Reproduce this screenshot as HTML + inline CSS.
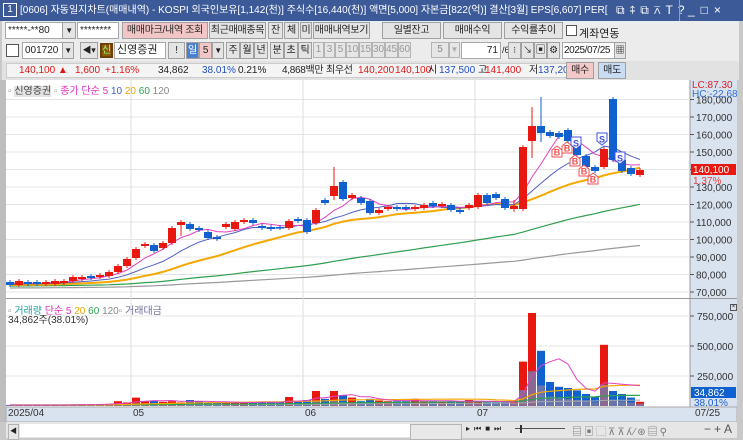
<!DOCTYPE html>
<html><head><meta charset="utf-8">
<style>
*{margin:0;padding:0;box-sizing:border-box}
body{width:743px;height:440px;overflow:hidden;background:#c9c9c9;font-family:"Liberation Sans","Noto Sans CJK KR",sans-serif;font-size:10px;color:#222;position:relative}
.a{position:absolute;white-space:nowrap}
.tb{left:0;top:0;width:743px;height:21px;background:#3d5a98;color:#fff;font-size:10px;line-height:21px}
.row{left:2px;width:737px;background:#ececec}
.inp{background:#fff;border:1px solid #a8a8a8;height:17px;line-height:15px;padding-left:2px;overflow:hidden}
.btn{background:#e4e4e4;border:1px solid #a0a0a0;height:17px;line-height:15px;text-align:center;letter-spacing:-0.3px;overflow:hidden}
.sb{background:#e6e6e6;border:1px solid #b4b4b4;height:16px;line-height:14px;text-align:center;color:#222}
.r{color:#e01818}.b{color:#2050c0}
.i4{top:64px;line-height:13px;height:13px}
</style></head><body>
<div class="a tb">
 <span class="a" style="left:3px;top:3px;width:14px;height:14px;border:1px solid #fff;line-height:12px;text-align:center;font-size:10px">1</span>
 <span class="a" style="left:20px;width:592px;overflow:hidden">[0606] 자동일지차트(매매내역) - KOSPI 외국인보유[1,142(천)] 주식수[16,440(천)] 액면[5,000] 자본금[822(억)] 결산[3월] EPS[6,607] PER[</span>
 <span class="a" style="left:616px;font-size:12px;letter-spacing:5px">⧉⇞⧉⊼T?</span>
 <span class="a" style="left:679px;width:1px;height:21px;background:#8aa0c8"></span>
 <span class="a" style="left:688px;font-size:12px;letter-spacing:6px">_□×</span>
</div>
<div class="a row" style="top:21px;height:20px"></div>
<div class="a inp" style="left:5px;top:22px;width:58px">*****-**80</div>
<div class="a btn" style="left:62px;top:22px;width:14px;font-size:8px">▼</div>
<div class="a inp" style="left:77px;top:22px;width:42px">********</div>
<div class="a btn" style="left:122px;top:22px;width:86px;background:#f2c6c6">매매마크/내역 조회</div>
<div class="a btn" style="left:209px;top:22px;width:57px">최근매매종목</div>
<div class="a btn" style="left:268px;top:22px;width:15px">잔</div>
<div class="a btn" style="left:284px;top:22px;width:15px">체</div>
<div class="a btn" style="left:300px;top:22px;width:12px">미</div>
<div class="a btn" style="left:313px;top:22px;width:57px">매매내역보기</div>
<div class="a btn" style="left:382px;top:22px;width:59px">일별잔고</div>
<div class="a btn" style="left:443px;top:22px;width:59px">매매수익</div>
<div class="a btn" style="left:504px;top:22px;width:59px">수익률추이</div>
<div class="a" style="left:566px;top:25px;width:11px;height:11px;background:#fff;border:1px solid #555"></div>
<div class="a" style="left:579px;top:25px;font-size:11px">계좌연동</div>
<div class="a row" style="top:41px;height:20px"></div>
<div class="a" style="left:6px;top:44px;width:13px;height:13px;border:1px solid #555;background:#fff"></div>
<div class="a inp" style="left:22px;top:42px;width:41px">001720</div>
<div class="a btn" style="left:62px;top:42px;width:12px;font-size:8px">▼</div>
<div class="a btn" style="left:80px;top:42px;width:18px;font-size:9px">◀▾</div>
<div class="a" style="left:100px;top:43px;width:13px;height:15px;background:#8a5a10;border:2px solid #6a4008;color:#9f6;font-size:10px;line-height:11px;text-align:center">신</div>
<div class="a inp" style="left:114px;top:42px;width:52px;font-size:11px">신영증권</div>
<div class="a btn" style="left:168px;top:42px;width:17px">!</div>
<div class="a btn" style="left:186px;top:42px;width:13px;background:#4a80d0;color:#fff">일</div>
<div class="a btn" style="left:199px;top:42px;width:13px;background:#f2c6c6">5</div>
<div class="a btn" style="left:212px;top:42px;width:12px;font-size:8px">▼</div>
<div class="a btn" style="left:226px;top:42px;width:14px">주</div>
<div class="a btn" style="left:240px;top:42px;width:14px">월</div>
<div class="a btn" style="left:254px;top:42px;width:14px">년</div>
<div class="a btn" style="left:270px;top:42px;width:14px">분</div>
<div class="a btn" style="left:284px;top:42px;width:14px">초</div>
<div class="a btn" style="left:298px;top:42px;width:14px">틱</div>
<div class="a" style="left:313px;top:42px;color:#999;font-size:10px">
 <span class="sb a" style="left:0;width:11px;color:#999">1</span><span class="sb a" style="left:11px;width:11px;color:#999">3</span><span class="sb a" style="left:22px;width:11px;color:#999">5</span><span class="sb a" style="left:33px;width:13px;color:#999">10</span><span class="sb a" style="left:46px;width:13px;color:#999">15</span><span class="sb a" style="left:59px;width:13px;color:#999">30</span><span class="sb a" style="left:72px;width:13px;color:#999">45</span><span class="sb a" style="left:85px;width:13px;color:#999">60</span></div>
<div class="a sb" style="left:431px;top:42px;width:18px;color:#888">5</div>
<div class="a sb" style="left:449px;top:42px;width:11px;color:#aaa;font-size:8px">▼</div>
<div class="a inp" style="left:461px;top:42px;width:40px;text-align:right;padding-right:2px">71</div>
<div class="a" style="left:502px;top:45px;font-size:9px">/600</div>
<div class="a btn" style="left:508px;top:42px;width:13px;font-size:9px">⁝</div>
<div class="a btn" style="left:521px;top:42px;width:13px;font-size:9px">↘</div>
<div class="a btn" style="left:534px;top:42px;width:13px;font-size:10px">▣</div>
<div class="a btn" style="left:547px;top:42px;width:13px;font-size:10px">⚙</div>
<div class="a inp" style="left:562px;top:42px;width:53px;font-size:10px;letter-spacing:-0.4px;padding-left:1px">2025/07/25</div>
<div class="a btn" style="left:614px;top:42px;width:12px;font-size:9px">▦</div>
<div class="a row" style="top:61px;height:19px;background:#e2e2e2"></div>
<div class="a" style="left:6px;top:63px;width:575px;height:15px;background:#f4f4f4;border:1px solid #ccc"></div>
<div class="a r i4" style="left:19px">140,100 ▲</div>
<div class="a r i4" style="left:75px">1,600</div>
<div class="a r i4" style="left:105px">+1.16%</div>
<div class="a i4" style="left:158px">34,862</div>
<div class="a b i4" style="left:202px">38.01%</div>
<div class="a i4" style="left:238px">0.21%</div>
<div class="a i4" style="left:282px;letter-spacing:-0.3px">4,868백만</div>
<div class="a i4" style="left:326px;letter-spacing:-0.3px">최우선</div>
<div class="a r i4" style="left:358px">140,200</div>
<div class="a r i4" style="left:395px">140,100</div>
<div class="a i4" style="left:428px">시</div>
<div class="a b i4" style="left:439px">137,500</div>
<div class="a i4" style="left:478px">고</div>
<div class="a r i4" style="left:485px">141,400</div>
<div class="a i4" style="left:529px">저</div>
<div class="a b i4" style="left:538px">137,200</div>
<div class="a btn" style="left:566px;top:62px;width:28px;background:#f4c8c8">매수</div>
<div class="a btn" style="left:598px;top:62px;width:28px;background:#c8dcf4">매도</div>
<svg class="a" style="left:0;top:0" width="743" height="440" id="sv">
<rect x="6" y="80" width="684" height="327" fill="#fff"/>
<rect x="0" y="80" width="6" height="342" fill="#bdbdbd"/>
<rect x="690" y="80" width="47" height="327" fill="#d9e3f0"/>
<line x1="690" y1="80" x2="690" y2="407" stroke="#999"/>
<line x1="6" y1="298.5" x2="737" y2="298.5" stroke="#999"/>
<rect x="6" y="407" width="731" height="15" fill="#d9e3f0" stroke="#aaa"/>
<rect x="6" y="422" width="731" height="16" fill="#e6e6e6"/>
<rect x="737" y="80" width="6" height="360" fill="#c9c9c9"/>
<g id="g"></g>
</svg>
<div class="a" style="left:8px;top:82px;font-size:10px;color:#666"><span style="color:#999">▫</span> <span style="background:#e4e4e4;color:#444">신영증권</span> <span style="color:#999">▫</span> <span style="color:#e030c0">종가 단순 5</span> <span style="color:#4060c0">10</span> <span style="color:#f0a800">20</span> <span style="color:#30a050">60</span> <span style="color:#888">120</span></div>
<div class="a" style="left:692px;top:81px;font-size:10px;color:#e02020;line-height:9px">LC:87.30</div>
<div class="a" style="left:692px;top:90px;font-size:10px;color:#3070d0;line-height:9px">HC:-22.68</div>
<div class="a" style="left:8px;top:302px;font-size:10px"><span style="color:#999">▫</span> <span style="color:#20a0a0">거래량</span> <span style="color:#e030c0">단순 5</span> <span style="color:#f0a800">20</span> <span style="color:#30a050">60</span> <span style="color:#888">120</span><span style="color:#999">▫</span> <span style="color:#7070a0">거래대금</span></div>
<div class="a" style="left:8px;top:311px;font-size:10px;color:#333">34,862주(38.01%)</div>
<div class="a" style="left:730px;top:304px;width:7px;height:7px;border:1px solid #555;font-size:6px;line-height:5px;text-align:center">×</div>
<div class="a" style="left:8px;top:408px;font-size:10px;color:#333">2025/04</div>
<div class="a" style="left:133px;top:408px;font-size:10px;color:#333">05</div>
<div class="a" style="left:305px;top:408px;font-size:10px;color:#333">06</div>
<div class="a" style="left:477px;top:408px;font-size:10px;color:#333">07</div>
<div class="a" style="left:695px;top:408px;font-size:10px;color:#333">07/25</div>
<div class="a sb" style="left:8px;top:424px;width:11px;font-size:7px">◀</div>
<div class="a" style="left:20px;top:424px;width:390px;height:13px;background:#fff"></div>
<div class="a sb" style="left:410px;top:424px;width:52px;background:#e8e8e8"></div>
<div class="a" style="left:466px;top:424px;font-size:8px;letter-spacing:4px">▸⏮■⏭</div>
<div class="a" style="left:515px;top:428px;width:50px;height:1px;background:#555"></div>
<div class="a" style="left:520px;top:425px;width:2px;height:8px;background:#333"></div>
<div class="a" style="left:572px;top:423px;font-size:10px;color:#777;letter-spacing:2px">▤▣⬚⊼⊼ʎ⁄⊛▤⚲</div>
<div class="a" style="left:704px;top:422px;font-size:12px;color:#555;letter-spacing:3px">−+A</div>
<script>
const g=document.getElementById('g');let h='';
const Y=p=>117+(170-p)*1.75;
for(let p=180;p>=70;p-=10){const y=Y(p);h+=`<line x1="6" y1="${y}" x2="690" y2="${y}" stroke="#e4e4e4"/>`;
 h+=`<line x1="690" y1="${y}" x2="694" y2="${y}" stroke="#555"/><text x="696" y="${y+4}" font-size="10" fill="#333">${p},000</text>`;}
[131,303,475].forEach(x=>{h+=`<line x1="${x}" y1="80" x2="${x}" y2="407" stroke="#ddd"/>`});
[316,346,376].forEach((y,k)=>{h+=`<line x1="6" y1="${y}" x2="690" y2="${y}" stroke="#e4e4e4"/><line x1="690" y1="${y}" x2="694" y2="${y}" stroke="#555"/><text x="697" y="${y+4}" font-size="10" fill="#333">${['750,000','500,000','250,000'][k]}</text>`});
const C=[['b',282,285],['r',281,285],['b',282,284],['b',282,284],['r',282,284],['r',281,284],['r',281,283],['r',277,281],['r',277,279],['b',276,278],['r',275,277],['r',272,276],['r',266,272],['r',259,266],['r',249,258],['r',244,246],['b',245,251],['r',243,248],['r',228,243],['r',222,225,220,236],['b',224,229],['b',228,230],['b',232,238],['b',237,239],['r',224,227],['r',222,229],['r',220,222],['b',220,223],['b',226,228],['b',227,229],['b',227,228],['r',221,228],['b',219,221],['b',220,232],['r',210,223],['b',200,203],['r',186,196,167,200],['b',182,199],['r',195,198],['b',198,203],['b',201,213],['r',210,213],['r',207,209],['b',207,209],['b',207,209],['r',207,209],['r',205,208],['b',203,206],['r',204,206],['b',205,210],['b',210,212],['r',205,208],['r',195,207],['b',195,203],['b',194,198],['b',199,208],['r',206,209,200,212],['r',147,209],['r',126,141,107,158],['b',126,133,97,142],['b',132,136],['b',133,137],['b',130,141],['b',142,155],['b',156,167],['b',167,171],['r',149,167],['b',99,160],['b',160,171],['b',168,174],['r',170,175]];
const V=[8,8,8,8,8,9,10,12,14,12,15,18,40,30,70,40,45,35,40,30,50,40,30,25,30,35,25,30,35,30,30,75,40,50,125,60,125,90,70,40,60,45,40,40,40,60,40,40,35,40,40,50,40,30,30,30,40,370,775,460,200,160,150,130,100,75,510,125,100,70,35];
const cl=C.map(c=>c[0]=='r'?c[1]:c[2]);
const ma=(arr,n,pad)=>arr.map((_,i)=>{let s=0;for(let k=i-n+1;k<=i;k++)s+=k<0?pad:arr[k];return s/n});
const line=(a,xs,col,w)=>`<polyline fill="none" stroke="${col}" stroke-width="${w}" points="${a.map((v,i)=>xs(i)+','+v.toFixed(1)).join(' ')}"/>`;
const X=i=>10+9*i;
h+=line(ma(cl,120,288),X,'#999',1.2);
h+=line(ma(cl,60,286),X,'#30a050',1.2);
h+=line(ma(cl,20,285),X,'#f5a800',2);
h+=line(ma(cl,10,284),X,'#5060c0',1);
h+=line(ma(cl,5,283),X,'#e040c0',1);
C.forEach((c,i)=>{const x=X(i),col=c[0]=='r'?'#e81810':'#1060d0';const wt=c[3]||c[1]-2,wb=c[4]||c[2]+2;
 h+=`<line x1="${x}" y1="${wt}" x2="${x}" y2="${wb}" stroke="${col}"/><rect x="${x-4}" y="${c[1]}" width="8" height="${Math.max(c[2]-c[1],1.5)}" fill="${col}"/>`;});
const mk=(x,y,t,col)=>{h+= t=='B'?`<path d="M${x-5} ${y+5}V${y-2}L${x} ${y-6}L${x+5} ${y-2}V${y+5}Z" fill="#fff" stroke="${col}"/>`:`<path d="M${x-5} ${y-6}V${y+2}L${x} ${y+6}L${x+5} ${y+2}V${y-6}Z" fill="#fff" stroke="${col}"/>`;
 h+=`<text x="${x}" y="${y+3.5}" font-size="9" font-weight="bold" fill="${col}" text-anchor="middle">${t}</text>`};
[[557,152],[567,148],[575,161],[584,171],[593,179]].forEach(p=>mk(p[0],p[1],'B','#f05050'));
[[576,143],[602,139],[620,158]].forEach(p=>mk(p[0],p[1],'S','#4050e0'));
const VY=v=>406-v*0.12;
V.forEach((v,i)=>{const x=X(i),col=C[i][0]=='r'?'#e81810':'#1060d0';h+=`<rect x="${x-4}" y="${VY(v)}" width="8" height="${v*0.12}" fill="${col}"/>`;
 const price=170-(cl[i]-117)/1.75;const o=v*0.12*0.22*price/100+1;h+=`<rect x="${x-4}" y="${406-o}" width="8" height="${o}" fill="#7878a8" opacity="0.85"/>`;});
const vy=V.map(VY);
h+=line(ma(vy,120,405),X,'#aaa',1);
h+=line(ma(vy,60,405),X,'#30a050',1.2);
h+=line(ma(vy,20,405),X,'#f5a800',1.2);
h+=line(ma(vy,5,405),X,'#e040c0',1);
h+=`<rect x="691" y="164" width="45" height="11" fill="#e81810"/><text x="693" y="173" font-size="10" fill="#fff">140,100</text><text x="693" y="184" font-size="10" fill="#e84040">1.37%</text>`;
h+=`<rect x="691" y="387" width="45" height="11" fill="#1060d0"/><text x="694" y="396" font-size="10" fill="#fff">34,862</text><text x="694" y="406" font-size="10" fill="#2060d0">38.01%</text>`;
g.innerHTML=h;
</script>
</body></html>
